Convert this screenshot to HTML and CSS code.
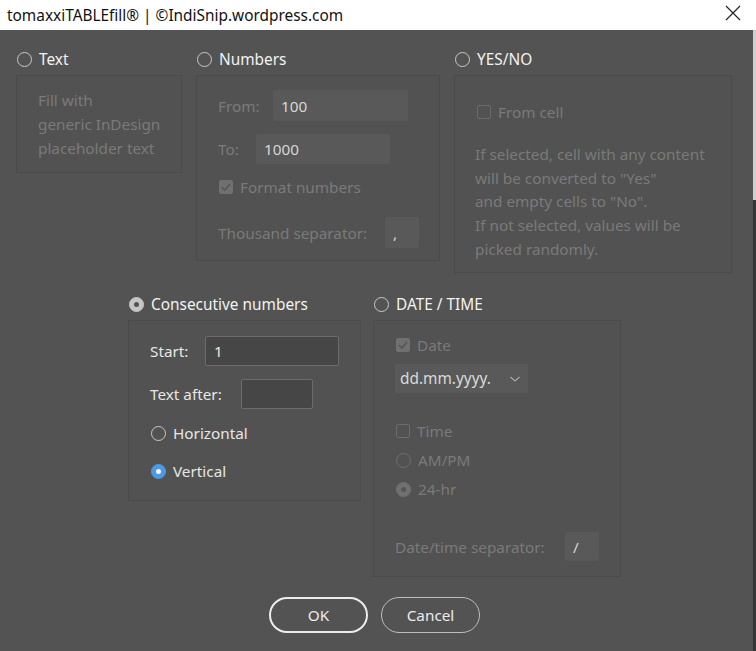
FILE: index.html
```html
<!DOCTYPE html>
<html lang="en">
<head>
<meta charset="utf-8">
<title>tomaxxiTABLEfill</title>
<link rel="stylesheet" href="styles.css">
</head>
<body>
<div class="screen">
  <div class="dialog">
    <div class="titlebar">
      <span class="title">tomaxxiTABLEfill® | ©IndiSnip.wordpress.com</span>
      <svg class="close" width="16" height="16" viewBox="0 0 16 16"><path d="M1 1 L15 15 M15 1 L1 15" stroke="#222" stroke-width="1.2" fill="none"/></svg>
    </div>
    <div class="content">
      <div class="row row1">
        <div class="group">
          <div class="head"><span class="radio"></span><span>Text</span></div>
          <div class="panel p-text">
            <p class="muted para">Fill with<br>generic InDesign<br>placeholder text</p>
          </div>
        </div>
        <div class="group">
          <div class="head"><span class="radio"></span><span>Numbers</span></div>
          <div class="panel p-num">
            <div class="field f-from"><span class="muted lbl w-from">From:</span><span class="input dis i-from">100</span></div>
            <div class="field f-to"><span class="muted lbl w-to">To:</span><span class="input dis i-to">1000</span></div>
            <div class="check-row f-fmt"><span class="cbox checked-dis"><svg width="14" height="14" viewBox="0 0 14 14"><path d="M3 7.2 L5.8 10 L11 4" stroke="#555" stroke-width="1.6" fill="none"/></svg></span><span class="muted">Format numbers</span></div>
            <div class="field f-th"><span class="muted lbl w-th">Thousand separator:</span><span class="input dis i-sep">,</span></div>
          </div>
        </div>
        <div class="group">
          <div class="head"><span class="radio"></span><span>YES/NO</span></div>
          <div class="panel p-yn">
            <div class="check-row f-cell"><span class="cbox dis"></span><span class="muted">From cell</span></div>
            <p class="muted para yn-text">If selected, cell with any content<br>will be converted to "Yes"<br>and empty cells to "No".<br>If not selected, values will be<br>picked randomly.</p>
          </div>
        </div>
      </div>
      <div class="row row2">
        <div class="group">
          <div class="head"><span class="radio on-grey"></span><span>Consecutive numbers</span></div>
          <div class="panel p-con">
            <div class="field f-start"><span class="lbl w-start">Start:</span><span class="input en i-start">1</span></div>
            <div class="field f-after"><span class="lbl w-after">Text after:</span><span class="input en i-after"></span></div>
            <div class="check-row f-hor"><span class="radio"></span><span>Horizontal</span></div>
            <div class="check-row f-ver"><span class="radio on-blue"></span><span>Vertical</span></div>
          </div>
        </div>
        <div class="group">
          <div class="head"><span class="radio"></span><span>DATE / TIME</span></div>
          <div class="panel p-date">
            <div class="check-row f-date"><span class="cbox checked-dis"><svg width="14" height="14" viewBox="0 0 14 14"><path d="M3 7.2 L5.8 10 L11 4" stroke="#555" stroke-width="1.6" fill="none"/></svg></span><span class="muted">Date</span></div>
            <div class="select f-sel"><span>dd.mm.yyyy.</span><svg width="12" height="8" viewBox="0 0 12 8"><path d="M1.5 2 L6 6 L10.5 2" stroke="#a8a8a8" stroke-width="1.2" fill="none"/></svg></div>
            <div class="check-row f-time"><span class="cbox dis"></span><span class="muted">Time</span></div>
            <div class="check-row f-ampm"><span class="radio dis"></span><span class="muted">AM/PM</span></div>
            <div class="check-row f-24"><span class="radio on-dis"></span><span class="muted">24-hr</span></div>
            <div class="field f-dsep"><span class="muted lbl w-dsep">Date/time separator:</span><span class="input dis i-sep">/</span></div>
          </div>
        </div>
      </div>
      <div class="buttons">
        <button class="btn ok">OK</button>
        <button class="btn cancel">Cancel</button>
      </div>
    </div>
  </div>
  <div class="strip"><div class="strip-top"></div><div class="strip-bot"></div></div>
</div>
</body>
</html>
```

FILE: styles.css
```css
* { box-sizing: border-box; }
html, body { margin: 0; padding: 0; }
body {
  width: 756px;
  height: 651px;
  overflow: hidden;
  font-family: "Noto Sans", "Open Sans", sans-serif;
  font-size: 15.3px;
  color: #e6e6e6;
  background: #535353;
}
.screen { display: flex; width: 756px; height: 651px; }
.dialog { width: 753px; height: 651px; display: flex; flex-direction: column; background: #535353; }
.titlebar {
  height: 30px;
  background: #ffffff;
  display: flex;
  align-items: center;
  justify-content: space-between;
  padding: 0 12px 0 7px;
}
.title { color: #111; font-size: 15.4px; letter-spacing: 0; }
.close { display: block; margin-top: -5px; }
.strip { width: 3px; display: flex; flex-direction: column; }
.strip-top { height: 200px; background: #cfcfcf; border-top: 30px solid #ffffff; }
.strip-bot { flex: 1; background: #363636; }

.content { padding: 20px 0 0 16px; display: flex; flex-direction: column; }
.row { display: flex; align-items: flex-start; }
.row1 { gap: 14px; }
.row2 { gap: 12px; margin-top: 22px; padding-left: 112px; }
.group { display: flex; flex-direction: column; }
.head {
  height: 18px;
  display: flex;
  align-items: center;
  gap: 7px;
  padding-left: 1px;
  color: #f2f2f2;
  font-size: 15.4px;
}
.panel {
  margin-top: 7px;
  border: 1px solid #4b4b4b;
  background: #525252;
  display: flex;
  flex-direction: column;
  align-items: flex-start;
  padding-left: 21px;
}
.muted { color: #7a7a7a; }
.para { margin: 0; line-height: 24px; white-space: nowrap; }

.p-text { width: 166px; height: 98px; padding-top: 12px; }
.p-num { width: 244px; height: 186px; padding-top: 14px; }
.p-yn { width: 278px; height: 198px; padding-top: 27px; }
.p-con { width: 233px; height: 181px; padding-top: 15px; }
.p-date { width: 248px; height: 257px; padding-top: 15px; }

.field { display: flex; align-items: center; }
.lbl { display: inline-block; white-space: nowrap; }
.input {
  display: flex;
  align-items: center;
  padding-left: 8px;
  border-radius: 2px;
}
.input.dis { background: #595959; color: #d6d6d6; }
.input.en { background: #464646; border: 1px solid #6c6c6c; color: #e8e8e8; }

.f-from .input { height: 31px; }
.w-from { width: 55px; }
.i-from { width: 135px; }
.f-to { margin-top: 13px; }
.f-to .input { height: 30px; }
.w-to { width: 38px; }
.i-to { width: 134px; }
.f-fmt { margin-top: 14px; }
.f-th { margin-top: 21px; }
.f-th .input { height: 31px; }
.w-th { width: 167px; }
.i-sep { width: 34px; }

.check-row { height: 18px; display: flex; align-items: center; gap: 7px; padding-left: 1px; white-space: nowrap; }
.cbox {
  width: 14px; height: 14px;
  border-radius: 2px;
  display: inline-flex;
  align-items: center;
  justify-content: center;
  flex: none;
}
.cbox.dis { border: 1px solid #6c6c6c; }
.cbox.checked-dis { background: #707070; }
.cbox svg { display: block; }

.yn-text { margin-top: 22px; margin-left: -1px; line-height: 23.7px; }

.radio {
  width: 15px; height: 15px;
  border-radius: 50%;
  border: 1.5px solid #c9c9c9;
  flex: none;
  position: relative;
  display: inline-block;
}
.radio.dis { border-color: #6e6e6e; }
.radio.on-grey { background: #c6c6c6; border-color: #c6c6c6; }
.radio.on-grey::after, .radio.on-blue::after, .radio.on-dis::after {
  content: "";
  position: absolute;
  left: 50%; top: 50%;
  width: 5px; height: 5px;
  margin: -2.5px 0 0 -2.5px;
  border-radius: 50%;
}
.radio.on-grey::after { background: #535353; }
.radio.on-blue { background: #4b9ae6; border-color: #4b9ae6; }
.radio.on-blue::after { background: #f4f4f4; }
.radio.on-dis { background: #707070; border-color: #707070; }
.radio.on-dis::after { background: #555; }

.f-start .input { height: 30px; }
.w-start { width: 55px; }
.i-start { width: 134px; }
.f-after { margin-top: 13px; }
.f-after .input { height: 30px; }
.w-after { width: 91px; }
.i-after { width: 72px; }
.f-hor { margin-top: 15px; }
.f-ver { margin-top: 20px; }

.select {
  margin-top: 10px;
  width: 133px; height: 29px;
  background: #595959;
  display: flex;
  align-items: center;
  justify-content: space-between;
  padding: 0 7px 0 5px;
  color: #dadada;
  font-size: 15.4px;
}
.select svg { display: block; }
.f-time { margin-top: 29px; }
.f-ampm { margin-top: 11px; }
.f-24 { margin-top: 11px; }
.f-dsep { margin-top: 34px; }
.f-dsep .input { height: 29px; }
.w-dsep { width: 170px; }

.buttons {
  margin-top: 20px;
  display: flex;
  justify-content: center;
  gap: 13px;
  padding-right: 20px;
}
.btn {
  width: 99px; height: 36px;
  border-radius: 18px;
  background: transparent;
  color: #ececec;
  font-family: "Noto Sans", "Open Sans", sans-serif;
  font-size: 15.3px;
  padding: 0;
}
.btn.ok { border: 2px solid #ececec; }
.btn.cancel { border: 1px solid #bdbdbd; }
```
